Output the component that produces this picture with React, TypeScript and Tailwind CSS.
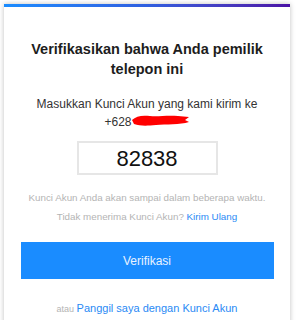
export default function App() {
  return (
    <div className="h-[320px] w-[301px] overflow-hidden bg-white pl-[4px] pt-[4px] font-['Liberation_Sans',Arial,sans-serif]">
      <div className="w-[286px] h-[330px] bg-white shadow-[0_0_5px_rgba(0,0,0,0.25)]">
        <div className="h-[3px] bg-gradient-to-r from-[#1a8cff] via-[#2f5fe0] to-[#4a12a6]" />
        <div className="flex flex-col items-center px-[10px] text-center">
          <h1 className="mt-[32px] w-[250px] text-[14.5px] font-bold leading-[20px] text-[#1d1d1d]">
            Verifikasikan bahwa Anda pemilik telepon ini
          </h1>
          <div className="mt-[16px] text-[12px] leading-[18px] text-[#333]">
            <div>Masukkan Kunci Akun yang kami kirim ke</div>
            <div className="flex items-center justify-center">
              <span>+628</span>
              <svg width="58" height="12" viewBox="0 0 58 12" className="-mt-[5px]">
                <path
                  d="M0 6 C4 2, 10 1, 18 2 S34 1, 46 2 L57 3 L53 6 L57 8 C48 11, 34 10, 24 11 S8 12, 2 10 Z"
                  fill="#ff0000"
                />
              </svg>
            </div>
          </div>
          <div className="mt-[10px] flex h-[34px] w-[141px] items-center justify-center border-2 border-[#e6e6e6] text-[22px] text-[#111]">
            82838
          </div>
          <div className="mt-[13px] whitespace-nowrap text-[9.8px] leading-[19px] text-[#b4b4b4]">
            <div>Kunci Akun Anda akan sampai dalam beberapa waktu.</div>
            <div>
              Tidak menerima Kunci Akun? <span className="text-[#2a8af5]">Kirim Ulang</span>
            </div>
          </div>
          <button className="mt-[16px] h-[37px] w-[253px] bg-[#1a8cff] text-[12px] text-[#e8f2ff]">
            Verifikasi
          </button>
          <div className="mt-[19px] whitespace-nowrap leading-[18px]">
            <span className="text-[9px] text-[#b4b4b4]">atau </span>
            <span className="text-[11px] text-[#2a8af5]">Panggil saya dengan Kunci Akun</span>
          </div>
        </div>
      </div>
    </div>
  );
}
